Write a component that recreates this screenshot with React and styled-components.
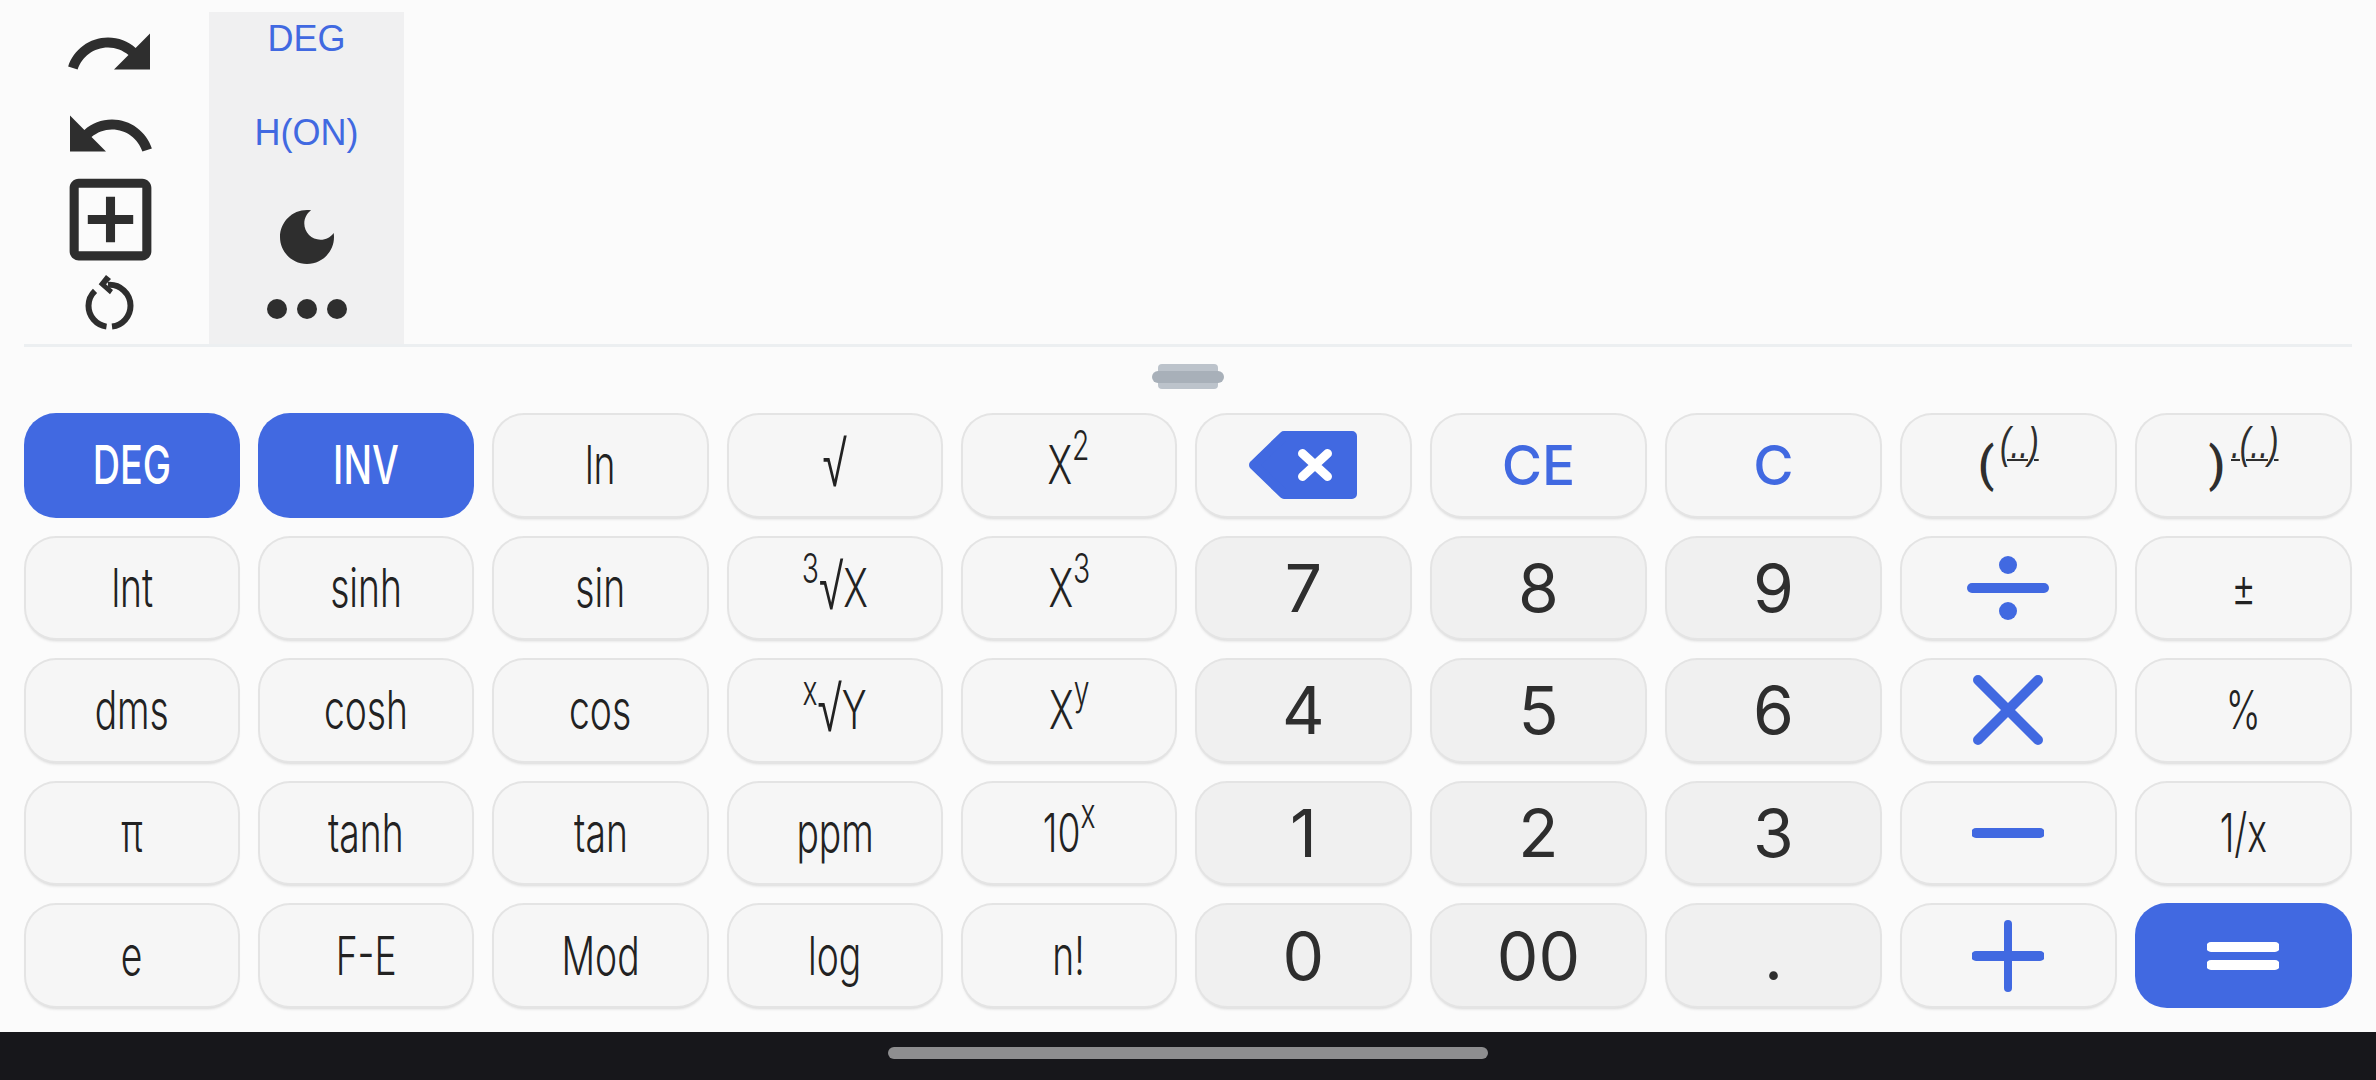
import styled, { createGlobalStyle } from "styled-components";

const ACCENT = "#4169e1";
const INK = "#2e2e2e";

const GlobalStyle = createGlobalStyle`
  html, body {
    margin: 0;
    padding: 0;
    background: #fbfbfb;
    overflow: hidden;
  }
`;

const Page = styled.div`
  width: 2376px;
  height: 1080px;
  display: flex;
  flex-direction: column;
  background: #fbfbfb;
  font-family: "Liberation Sans", Arial, sans-serif;
`;
const Display = styled.div`
  height: 344px;
  padding: 0 24px;
  display: flex;
  gap: 13px;
`;
const ToolColumn = styled.div`
  width: 172px;
  padding-top: 12px;
  display: grid;
  grid-template-rows: repeat(4, 83px);
  justify-items: center;
  align-items: center;
`;
const ModePanel = styled.div`
  width: 195px;
  margin-top: 12px;
  background: #f0f0f1;
  display: grid;
  grid-template-rows: 53px 135px 74px 70px;
  justify-items: center;
  align-items: center;
`;
const ModeText = styled.div`
  color: ${ACCENT};
  font-size: 36px;
  line-height: 1;
`;
const Icon = styled.svg`
  display: block;
  fill: ${INK};
  overflow: visible;
`;
const Divider = styled.div`
  height: 3px;
  margin: 0 24px;
  background: #eceff1;
`;
const Handle = styled.div`
  position: relative;
  width: 60px;
  height: 25px;
  margin: 17px auto 24px;
  border-radius: 4px;
  background: #bcc3cb;
  &::after {
    content: "";
    position: absolute;
    left: -6px;
    right: -6px;
    top: 7px;
    height: 12px;
    border-radius: 6px;
    background: #a8b0b9;
  }
`;
const Keypad = styled.div`
  padding: 0 24px;
  display: grid;
  grid-template-columns: repeat(5, 216.2px) repeat(5, 217px);
  grid-template-rows: repeat(5, 104.6px);
  gap: 18px;
`;
const KEY_BG = { fn: "#f6f6f6", num: "#f0f0f0", accent: ACCENT };
const Key = styled.div`
  display: flex;
  align-items: center;
  justify-content: center;
  overflow: hidden;
  white-space: nowrap;
  background: ${(p) => KEY_BG[p.$kind]};
  color: ${INK};
  border-radius: ${(p) => (p.$kind === "accent" ? "32px" : "30px")};
  margin: ${(p) => (p.$kind === "accent" ? "0" : "2px")};
  box-shadow: ${(p) =>
    p.$kind === "accent"
      ? "none"
      : "0 0 0 2px #e4e4e4, 0 3px 3px rgba(0, 0, 0, 0.14)"};
`;
const FnLabel = styled.span`
  display: inline-block;
  font-family: Inter, "Liberation Sans", sans-serif;
  font-size: 54px;
  font-weight: ${(p) => (p.$light ? 500 : 340)};
  line-height: 1;
  color: ${(p) => (p.$light ? "#fff" : "#222")};
  transform: scaleX(${(p) => p.$squeeze || 0.69});
`;
const Sup = styled.span`
  font-size: 41px;
  line-height: 0;
  vertical-align: ${(p) => p.$lift || 24}px;
`;
const RootSign = styled.span`
  font-family: "Liberation Sans", sans-serif;
  font-size: 64px;
  line-height: 0;
  vertical-align: -2px;
`;
const Digit = styled.span`
  font-family: Inter, sans-serif;
  font-size: 66px;
  line-height: 1;
  color: ${INK};
`;
const ClearLabel = styled.span`
  font-family: Inter, sans-serif;
  font-weight: 500;
  font-size: 55px;
  line-height: 1;
  color: ${ACCENT};
`;
const ParenWrap = styled.span`
  display: inline-flex;
  align-items: flex-start;
  gap: 6px;
  font-family: Roboto, sans-serif;
  color: ${INK};
`;
const Paren = styled.span`
  font-size: 48px;
  line-height: 1;
  font-weight: 500;
`;
const ParenHint = styled.span`
  display: inline-block;
  width: ${(p) => p.$w}px;
  margin-top: -20px;
  font-family: "Liberation Sans", sans-serif;
  font-style: italic;
  font-size: 44px;
  line-height: 44px;
  text-decoration: underline;
  text-decoration-thickness: 2px;
  transform: scaleX(0.72);
  transform-origin: left center;
`;

const Path = ({ x = 0, y = 0, size, d }) => (
  <Icon width={size} height={size} viewBox={`${x} ${y} 24 24`}>
    <path d={d} />
  </Icon>
);

const Stroke = styled.svg`
  display: block;
  fill: none;
  stroke: ${(p) => p.$color || ACCENT};
  stroke-width: ${(p) => p.$weight || 10};
  stroke-linecap: ${(p) => p.$cap || "round"};
`;

const Restart = () => (
  <Stroke width="80" height="75" viewBox="0 0 80 75" $color={INK} $weight={6} $cap="butt">
    <path d="M42 61.6A21 21 0 0 0 60.5 40.8A21 21 0 0 0 38 19.9" />
    <path d="M36.5 61.6A21 21 0 0 1 18.5 40.8A21 21 0 0 1 25 25.8" />
    <polygon points="36,10 28.7,19.3 40,29.3 43,25 36,19.3 41,14" fill={INK} stroke="none" />
  </Stroke>
);
const Divide = () => (
  <Stroke width="82" height="64" viewBox="0 0 82 64">
    <path d="M5 32H77" />
    <circle cx="41" cy="9" r="9" fill={ACCENT} stroke="none" />
    <circle cx="41" cy="55" r="9" fill={ACCENT} stroke="none" />
  </Stroke>
);
const Times = () => (
  <Stroke width="70" height="70" viewBox="0 0 70 70">
    <path d="M5 5L65 65M65 5L5 65" />
  </Stroke>
);
const Minus = () => (
  <Stroke width="72" height="10" viewBox="0 0 72 10">
    <path d="M4 5H68" />
  </Stroke>
);
const Plus = () => (
  <Stroke width="72" height="72" viewBox="0 0 72 72">
    <path d="M4 36H68" />
    <path d="M36 4V68" strokeWidth="8" />
  </Stroke>
);
const Equals = () => (
  <Stroke width="72" height="28" viewBox="0 0 72 28" $color="#fff">
    <path d="M4 5H68M4 23H68" />
  </Stroke>
);
const Backspace = () => (
  <svg width="108" height="68" viewBox="0 0 108 68" style={{ display: "block" }}>
    <polygon
      points="35,5 103,5 103,63 35,63 5,34"
      fill={ACCENT}
      stroke={ACCENT}
      strokeWidth="10"
      strokeLinejoin="round"
    />
    <path
      d="M53.5 22.5L78.5 45.5M78.5 22.5L53.5 45.5"
      stroke="#fff"
      strokeWidth="9"
      strokeLinecap="round"
    />
  </svg>
);

const fn = (content, squeeze) => ({ kind: "fn", node: <FnLabel $squeeze={squeeze}>{content}</FnLabel> });
const num = (content) => ({ kind: "num", node: <Digit>{content}</Digit> });
const op = (node) => ({ kind: "fn", node });

const KEYS = [
  { kind: "accent", node: <FnLabel $light $squeeze={0.7}>DEG</FnLabel> },
  { kind: "accent", node: <FnLabel $light $squeeze={0.7}>INV</FnLabel> },
  fn("ln"),
  fn(<RootSign>√</RootSign>),
  fn(<>X<Sup>2</Sup></>),
  op(<Backspace />),
  op(<ClearLabel>CE</ClearLabel>),
  op(<ClearLabel>C</ClearLabel>),
  op(<ParenWrap><Paren>(</Paren><ParenHint $w={39}>(..)</ParenHint></ParenWrap>),
  op(<ParenWrap><Paren>)</Paren><ParenHint $w={47}>.(..)</ParenHint></ParenWrap>),

  fn("lnt"),
  fn("sinh"),
  fn("sin"),
  fn(<><Sup>3</Sup><RootSign>√</RootSign>X</>),
  fn(<>X<Sup>3</Sup></>),
  num("7"),
  num("8"),
  num("9"),
  op(<Divide />),
  fn("±"),

  fn("dms"),
  fn("cosh"),
  fn("cos"),
  fn(<><Sup>x</Sup><RootSign>√</RootSign>Y</>),
  fn(<>X<Sup>y</Sup></>),
  num("4"),
  num("5"),
  num("6"),
  op(<Times />),
  fn("%"),

  fn("π"),
  fn("tanh"),
  fn("tan"),
  fn("ppm"),
  fn(<>10<Sup>x</Sup></>),
  num("1"),
  num("2"),
  num("3"),
  op(<Minus />),
  fn("1/x"),

  fn("e"),
  fn("F-E"),
  fn("Mod"),
  fn("log"),
  fn("n!"),
  num("0"),
  num("00"),
  num("."),
  op(<Plus />),
  { kind: "accent", node: <Equals /> },
];

const NavBar = styled.div`
  margin-top: auto;
  height: 48px;
  background: #17171b;
  display: flex;
  justify-content: center;
  padding-top: 15px;
  box-sizing: border-box;
`;
const NavPill = styled.div`
  width: 600px;
  height: 12px;
  border-radius: 6px;
  background: #8e8e90;
`;

export default function App() {
  return (
    <Page>
      <GlobalStyle />
      <Display>
        <ToolColumn>
          <Path
            size={96}
            y={0.125}
            d="M18.4 10.6C16.55 8.99 14.15 8 11.5 8c-4.65 0-8.58 3.03-9.96 7.22L3.9 16c1.05-3.19 4.05-5.5 7.6-5.5 1.95 0 3.73.72 5.12 1.88L13 16h9V7l-3.6 3.6z"
          />
          <Path
            size={96}
            y={0.375}
            d="M12.5 8c-2.65 0-5.05.99-6.9 2.6L2 7v9h9l-3.62-3.62c1.39-1.16 3.16-1.88 5.12-1.88 3.54 0 6.55 2.31 7.6 5.5l2.37-.78C21.08 11.03 17.15 8 12.5 8z"
          />
          <Path
            size={109}
            d="M19 3H5c-1.11 0-2 .9-2 2v14c0 1.1.89 2 2 2h14c1.1 0 2-.9 2-2V5c0-1.1-.9-2-2-2zm0 16H5V5h14v14zm-8-2h2v-4h4v-2h-4V7h-2v4H7v2h4z"
          />
          <Restart />
        </ToolColumn>
        <ModePanel>
          <ModeText>DEG</ModeText>
          <ModeText>H(ON)</ModeText>
          <Path
            size={72}
            d="M12 3c-4.97 0-9 4.03-9 9s4.03 9 9 9 9-4.03 9-9c0-.46-.04-.92-.1-1.36-.98 1.37-2.58 2.26-4.4 2.26-2.98 0-5.4-2.42-5.4-5.4 0-1.81.89-3.42 2.26-4.4-.44-.06-.9-.1-1.36-.1z"
          />
          <Icon width="80" height="20" viewBox="0 0 80 20">
            <circle cx="10" cy="10" r="10" />
            <circle cx="40" cy="10" r="10" />
            <circle cx="70" cy="10" r="10" />
          </Icon>
        </ModePanel>
      </Display>
      <Divider />
      <Handle />
      <Keypad>
        {KEYS.map((key, index) => (
          <Key key={index} $kind={key.kind}>
            {key.node}
          </Key>
        ))}
      </Keypad>
      <NavBar>
        <NavPill />
      </NavBar>
    </Page>
  );
}
